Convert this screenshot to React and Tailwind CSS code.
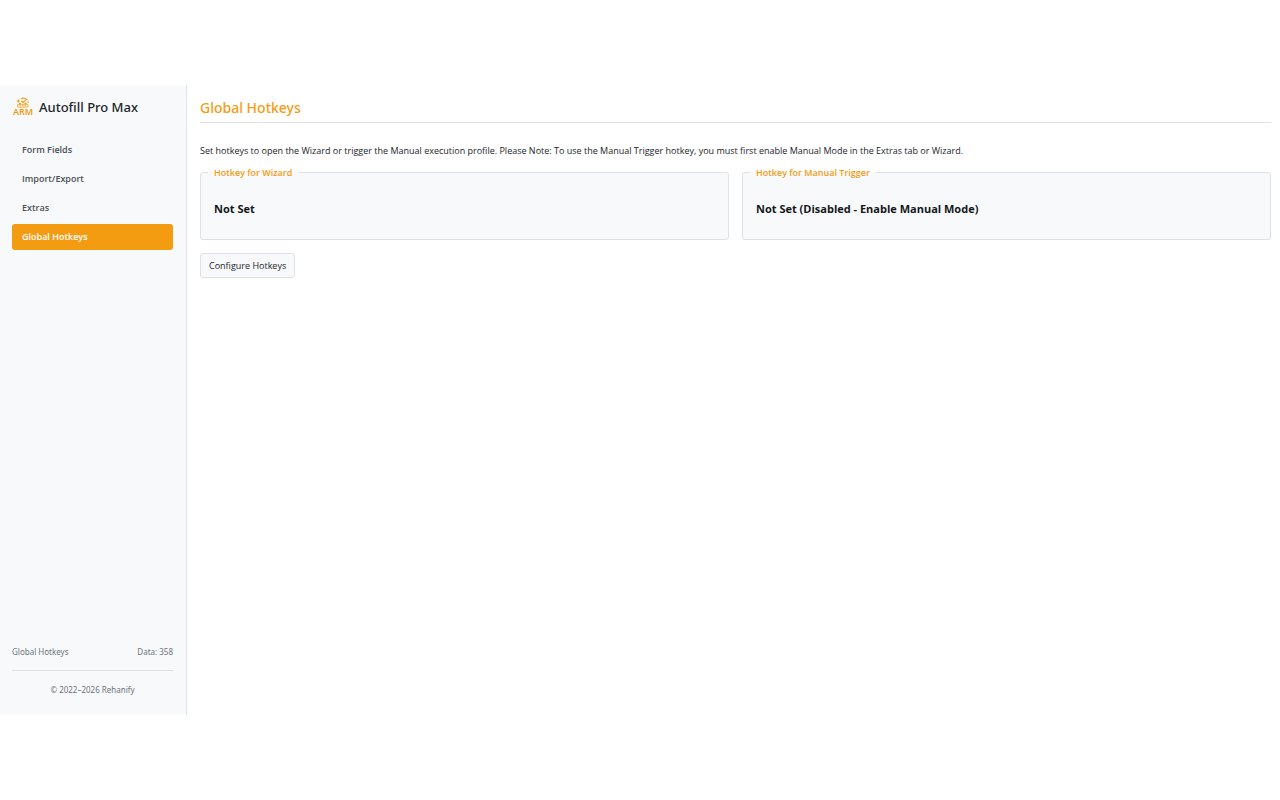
import React from 'react';
import clsx from 'clsx';

const NAV_ITEMS = [
  { id: 'fields', label: 'Form Fields' },
  { id: 'transfer', label: 'Import/Export' },
  { id: 'extras', label: 'Extras' },
  { id: 'hotkeys', label: 'Global Hotkeys' },
];

const HOTKEYS = [
  { id: 'wizard', title: 'Hotkey for Wizard', value: 'Not Set' },
  { id: 'manual', title: 'Hotkey for Manual Trigger', value: 'Not Set (Disabled - Enable Manual Mode)' },
];

function Logo() {
  return (
    <svg viewBox="0 0 22 20" className="h-5 w-[22px] overflow-visible" fill="none" stroke="#f39c12" aria-hidden="true">
      {/* gear with a check mark */}
      <path d="M9 .8c2-1.2 5-.6 6.2 1.2M16 3.4l.3 1.6M4.8 3h3M6.3 1.6v2.8" strokeWidth="1.2" />
      <path d="M9.2 3l1.8 1.4 2.8-2.8M7 5.6h2M12.5 5.4h2" strokeWidth="1.1" />
      {/* form box */}
      <rect x="5.5" y="6.3" width="10.5" height="2.8" rx="0.8" strokeWidth="0.8" />
      <path d="M7.5 7.7h1.4M10.1 7.7h1.4M12.7 7.7h1.4" strokeWidth="0.9" />
      <text
        x="11"
        y="17"
        textAnchor="middle"
        className="font-['Noto_Sans',sans-serif] text-[9px] font-semibold"
        fill="#f39c12"
        stroke="none"
      >
        ARM
      </text>
    </svg>
  );
}

function Sidebar() {
  return (
    <aside className="flex w-[187px] shrink-0 flex-col border-r border-[#dee2e6] bg-[#f8f9fa] px-3 pt-[13px] pb-[19px]">
      <div className="flex h-5 items-center gap-[5px]">
        <Logo />
        <span className="font-['Noto_Sans','Segoe_UI',sans-serif] text-[13px] font-medium whitespace-nowrap">
          Autofill Pro Max
        </span>
      </div>

      <nav className="mt-[19px] mr-px flex flex-col gap-[3px]">
        {NAV_ITEMS.map((item) => (
          <a
            key={item.id}
            href={`#${item.id}`}
            className={clsx(
              'flex h-[26px] items-center rounded-[3px] px-[10px] text-[9px] font-semibold',
              item.id === 'hotkeys' ? 'bg-[#f39c12] text-white' : 'text-[#495057]'
            )}
          >
            {item.label}
          </a>
        ))}
      </nav>

      <footer className="mt-auto mr-px font-['Noto_Sans','Segoe_UI',sans-serif] text-[8px] leading-3 text-[#6c757d]">
        <div className="flex justify-between border-b border-[#dee2e6] pb-3">
          <span>Global Hotkeys</span>
          <span>Data: 358</span>
        </div>
        <p className="pt-[13px] text-center">© 2022–2026 Rehanify</p>
      </footer>
    </aside>
  );
}

export default function App() {
  return (
    <div className="flex min-h-screen bg-white py-[85px] font-['Open_Sans','Segoe_UI',sans-serif] text-[#212529]">
      <Sidebar />

      <main className="min-w-0 flex-1 pt-[13px] pr-[9px] pl-[13px]">
        <h1 className="border-b border-[#dee2e6] pb-1 font-['Noto_Sans','Segoe_UI',sans-serif] text-[14px] leading-5 font-medium text-[#f39c12]">
          Global Hotkeys
        </h1>
        <p className="mt-5 text-[9px] leading-4">
          Set hotkeys to open the Wizard or trigger the Manual execution profile. Please Note: To use the Manual
          Trigger hotkey, you must first enable Manual Mode in the Extras tab or Wizard.
        </p>

        <div className="mt-[6px] grid grid-cols-2 gap-[13px]">
          {HOTKEYS.map((hotkey) => (
            <fieldset
              key={hotkey.id}
              className="min-w-0 rounded-[3px] border border-[#dee2e6] bg-[#f8f9fa] px-[7px] pb-5"
            >
              <legend className="px-[6px] pt-[2px] text-[9px] leading-3 font-semibold text-[#f39c12]">
                {hotkey.title}
              </legend>
              <p className="px-[6px] pt-5 text-[11px] leading-5 font-bold text-[#14171a]">{hotkey.value}</p>
            </fieldset>
          ))}
        </div>

        <button
          type="button"
          className="mt-[13px] h-[25px] rounded-[3px] border border-[#dee2e6] bg-[#f8f9fa] px-2 text-[9px]"
        >
          Configure Hotkeys
        </button>
      </main>
    </div>
  );
}
